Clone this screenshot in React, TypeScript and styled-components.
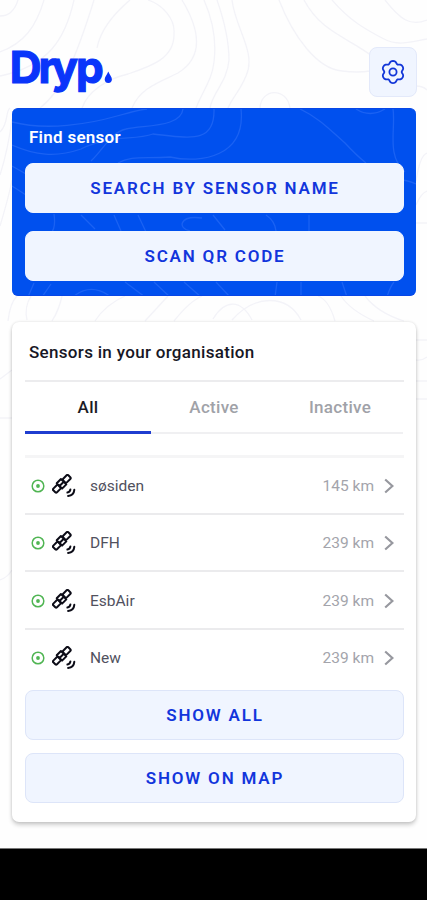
import React from "react";
import styled, { createGlobalStyle } from "styled-components";

const GlobalStyle = createGlobalStyle`
  * { box-sizing: border-box; }
  html, body { margin: 0; padding: 0; background: #fff; }
  body { font-family: Roboto, "Liberation Sans", sans-serif; }
  button { font-family: inherit; margin: 0; cursor: pointer; }
`;

const Screen = styled.div`
  position: relative;
  isolation: isolate;
  width: 427px;
  height: 900px;
  overflow: hidden;
  display: flex;
  flex-direction: column;
  background: #fefefe;
`;

const Contours = styled.svg<{ $line: string }>`
  position: absolute;
  inset: 0;
  z-index: -1;
  fill: none;
  stroke: ${(p) => p.$line};
  stroke-width: 1.3;
`;

const Content = styled.main`
  flex: 1;
  padding: 47px 11px 0 12px;
`;

const Header = styled.header`
  display: flex;
  justify-content: space-between;
  align-items: flex-start;
  height: 61px;
`;

const Logo = styled.svg`
  width: 104px;
  height: 50px;
  overflow: visible;
  fill: #0a35fa;
  font-family: Inter, sans-serif;
  font-size: 44px;
  font-weight: 700;
`;

const IconButton = styled.button`
  display: flex;
  align-items: center;
  justify-content: center;
  width: 48px;
  height: 50px;
  margin-right: -1px;
  padding: 0;
  border: 1.5px solid #e3e9fa;
  border-radius: 8px;
  background: #f0f5ff;
`;

const GearIcon = styled.svg`
  width: 28px;
  height: 28px;
  fill: none;
  stroke: #1236d8;
  stroke-width: 1.8;
  stroke-linejoin: round;
`;

const FindPanel = styled.section`
  position: relative;
  isolation: isolate;
  overflow: hidden;
  height: 188px;
  padding: 18px 12px 0 13px;
  border-radius: 6px;
  background: #0050ee;
  border: 1px solid #0846e6;
  border-width: 1px 0;
`;

const PanelTitle = styled.h2`
  margin: 0 0 0 4px;
  height: 36px;
  font-size: 17px;
  line-height: 20px;
  font-weight: 600;
  letter-spacing: 0.27px;
  color: #fff;
`;

const Stack = styled.div<{ $gap: number }>`
  display: flex;
  flex-direction: column;
  gap: ${(p) => p.$gap}px;
`;

const ActionButton = styled.button<{ $outlined?: boolean }>`
  height: 50px;
  padding: 0 0 0 1px;
  border: 1.5px solid ${(p) => (p.$outlined ? "#dde5f9" : "#f0f5ff")};
  border-radius: 8px;
  background: #f0f5ff;
  color: #1235dc;
  font-size: 17px;
  font-weight: 600;
  letter-spacing: 1.8px;
`;

const Card = styled.section`
  height: 500px;
  margin-top: 26px;
  padding: 0 12px 0 13px;
  border-radius: 7px;
  background: #fff;
  box-shadow: 0 3px 4px rgba(0, 0, 0, 0.19), 0 0 3px rgba(0, 0, 0, 0.12);
`;

const CardTitle = styled.h2`
  height: 60px;
  margin: 0;
  padding: 20px 4px 0;
  border-bottom: 2px solid #ececee;
  font-size: 17px;
  line-height: 20px;
  font-weight: 500;
  letter-spacing: 0.31px;
  color: #171725;
`;

const Tabs = styled.div`
  display: grid;
  grid-template-columns: repeat(3, 1fr);
  height: 52px;
  margin-right: 1px;
  border-bottom: 2px solid #f0f0f2;
`;

const Tab = styled.button<{ $active?: boolean }>`
  height: 52px;
  padding: 1px 0 0;
  border: 0;
  border-bottom: 3px solid ${(p) => (p.$active ? "#1f3dd0" : "transparent")};
  background: none;
  color: ${(p) => (p.$active ? "#1b1b24" : "#a0a2a8")};
  font-size: 17px;
  font-weight: 500;
  letter-spacing: 0.3px;
`;

const List = styled.ul`
  list-style: none;
  margin: 21px 0 0;
  padding: 0;
  border-top: 3px solid #f5f5f6;
`;

const Row = styled.li`
  display: flex;
  align-items: center;
  height: 57.7px;
  padding: 1px 9px 0 6px;
  border-bottom: 2px solid #ebebed;
  font-size: 15.5px;
  font-weight: 400;
  color: #51515e;
  &:first-child { height: 56.5px; }
  &:last-child {
    height: 60.4px;
    padding-bottom: 3px;
    border-color: transparent;
  }
`;

const StatusIcon = styled.svg`
  width: 14px;
  height: 14px;
  margin-left: -0.5px;
  fill: none;
  stroke: #50b553;
`;

const SatelliteIcon = styled.svg`
  width: 24px;
  height: 24px;
  margin: 0 14px 0 7.5px;
  fill: none;
  stroke: #0c0c17;
  stroke-width: 2;
  stroke-linejoin: round;
  stroke-linecap: round;
`;

const Name = styled.span`
  flex: 1;
`;

const Distance = styled.span`
  color: #a3a4ab;
`;

const Chevron = styled.svg`
  width: 10px;
  height: 16px;
  margin: 0 1px 0 10px;
  fill: none;
  stroke: #97989f;
  stroke-width: 2.2;
`;

const NavBar = styled.footer`
  height: 52px;
  background: #000;
  border-top: 1px solid #777;
`;

const sensors = [
  { name: "søsiden", distance: "145 km" },
  { name: "DFH", distance: "239 km" },
  { name: "EsbAir", distance: "239 km" },
  { name: "New", distance: "239 km" },
];

// Six rounded teeth, the first pointing straight up.
const gearPath =
  Array.from({ length: 72 }, (_, i) => {
    const a = (i / 72) * Math.PI * 2;
    const r = 10.1 + 1.2 * Math.cos(6 * a) - 0.25 * Math.cos(12 * a);
    const x = (14 + r * Math.sin(a)).toFixed(2);
    const y = (14 - r * Math.cos(a)).toFixed(2);
    return `${i ? "L" : "M"}${x} ${y}`;
  }).join("") + "Z";

const pageLines = [
  "M0 16Q13 16 18 0",
  "M0 52C24 43 36 27 44 0",
  "M0 76C48 66 65 40 74 0",
  "M40 108C62 91 76 58 94 0",
  "M97 48C101 27 117 11 130 0",
  "M148 0C163 5 175 19 174 33C175 58 152 66 128 74C107 79 88 91 82 108",
  "M182 0C200 30 204 57 178 73C160 82 140 88 132 108",
  "M204 0C211 16 217 38 214 62C212 80 203 90 196 108",
  "M217 0C224 20 229 39 229 60C227 83 213 91 210 108",
  "M232 0C235 28 257 53 246 76C240 91 232 98 228 108",
  "M279 0C293 36 317 69 342 71Q358 73 370 71",
  "M304 0C321 32 347 37 372 56",
  "M332 0C351 22 367 30 382 38S405 43 427 39",
  "M385 0C400 19 410 27 427 20",
  "M260 108C261 88 287 87 290 108",
  "M0 132C9 123 5 112 10 108M0 175Q8 150 12 119M0 226Q9 196 12 180",
  "M416 86Q423 86 427 90M416 181Q420 155 427 153M416 205Q421 193 427 191M416 223H427",
  "M8 321Q10 303 17 296M27 320Q24 307 31 296M52 321Q59 310 62 296M95 321Q105 305 125 296M145 321Q157 308 168 296M174 321Q190 301 202 296",
  "M213 319C225 299 241 299 252 320M232 320C255 294 287 294 301 320M318 296Q329 300 335 321M341 296Q350 310 374 321M365 296Q378 313 404 321",
  "M416 340H427M416 360Q422 361 427 357M416 381H427M416 399H427M0 379L12 370M0 418H12M0 580Q8 577 12 570",
];

const panelLines = [
  "M0 13C35 22 77 15 105 7C126 1 130 0 135 0M171 0Q170 9 158 13C143 18 127 17 114 20C99 23 91 41 79 52",
  "M0 36C23 46 43 49 69 40C100 25 121 32 141 25C178 29 203 35 202 0",
  "M106 54C119 46 134 50 158 48C190 55 234 47 229 0",
  "M288 0C309 10 320 23 333 34Q344 46 354 54",
  "M344 0Q358 9 373 0M381 0C384 19 374 47 393 63",
  "M0 57L14 65M0 77L14 86M42 105Q44 119 39 124M69 106L83 120M102 106L109 122M126 106L134 123",
  "M190 109C166 106 166 120 178 122M201 106L213 121M254 106Q263 112 264 122M297 106V122",
  "M16 188L22 174M30 188L39 175M61 188C74 177 87 179 99 188M113 173L133 188M142 173L158 188M172 173L189 188M204 173L218 188M265 173L263 188M289 173V188M330 173L335 188M375 188Q378 178 382 173M382 72Q391 69 404 75",
];

export default function App() {
  return (
    <>
      <GlobalStyle />
      <Screen>
        <Contours $line="#f3f3f8" width="427" height="850" viewBox="0 0 427 850">
          {pageLines.map((d) => <path key={d} d={d} />)}
        </Contours>
        <Content>
          <Header>
            <Logo viewBox="0 0 104 50" role="img" aria-label="Dryp">
              <text y="36" x="-2.2 26.5 39.5 64" stroke="#0a35fa" strokeWidth="1.2">Dryp</text>
              <path d="M96.3 24.5C95 28 92.7 29.6 92.7 32.3a3.6 3.6 0 0 0 7.2 0C99.9 29.6 97.6 28 96.3 24.5Z" />
            </Logo>
            <IconButton aria-label="Settings">
              <GearIcon viewBox="0 0 28 28">
                <path d={gearPath} />
                <circle cx="14" cy="14" r="3.6" />
              </GearIcon>
            </IconButton>
          </Header>
          <FindPanel>
            <Contours $line="#1a62f3" width="404" height="188" viewBox="0 0 404 188">
              {panelLines.map((d) => <path key={d} d={d} />)}
            </Contours>
            <PanelTitle>Find sensor</PanelTitle>
            <Stack $gap={18}>
              <ActionButton>SEARCH BY SENSOR NAME</ActionButton>
              <ActionButton>SCAN QR CODE</ActionButton>
            </Stack>
          </FindPanel>
          <Card>
            <CardTitle>Sensors in your organisation</CardTitle>
            <Tabs>
              <Tab $active>All</Tab>
              <Tab>Active</Tab>
              <Tab>Inactive</Tab>
            </Tabs>
            <List>
              {sensors.map((s) => (
                <Row key={s.name}>
                  <StatusIcon viewBox="0 0 14 14">
                    <circle cx="7" cy="7" r="5.8" strokeWidth="1.5" />
                    <circle cx="7" cy="7" r="1.9" fill="#50b553" stroke="none" />
                  </StatusIcon>
                  <SatelliteIcon viewBox="0 0 24 24">
                    <g transform="translate(9.8 9.8) rotate(-45)">
                      <rect x="-10.6" y="-2.6" width="7.2" height="5.2" rx="1.2" />
                      <rect x="3.4" y="-2.6" width="7.2" height="5.2" rx="1.2" />
                      <path d="M-3.2 -4H2.8V3.6H-3.2ZM-3.2 0H2.8" />
                    </g>
                    <path d="M18.4 15.4Q18.1 18.1 15.4 18.5M22.3 15.8Q21.8 21.3 16.1 22" />
                  </SatelliteIcon>
                  <Name>{s.name}</Name>
                  <Distance>{s.distance}</Distance>
                  <Chevron viewBox="0 0 10 16">
                    <path d="M1.2 1.5 8.4 8l-7.2 6.5" />
                  </Chevron>
                </Row>
              ))}
            </List>
            <Stack $gap={13}>
              <ActionButton $outlined>SHOW ALL</ActionButton>
              <ActionButton $outlined>SHOW ON MAP</ActionButton>
            </Stack>
          </Card>
        </Content>
        <NavBar />
      </Screen>
    </>
  );
}
